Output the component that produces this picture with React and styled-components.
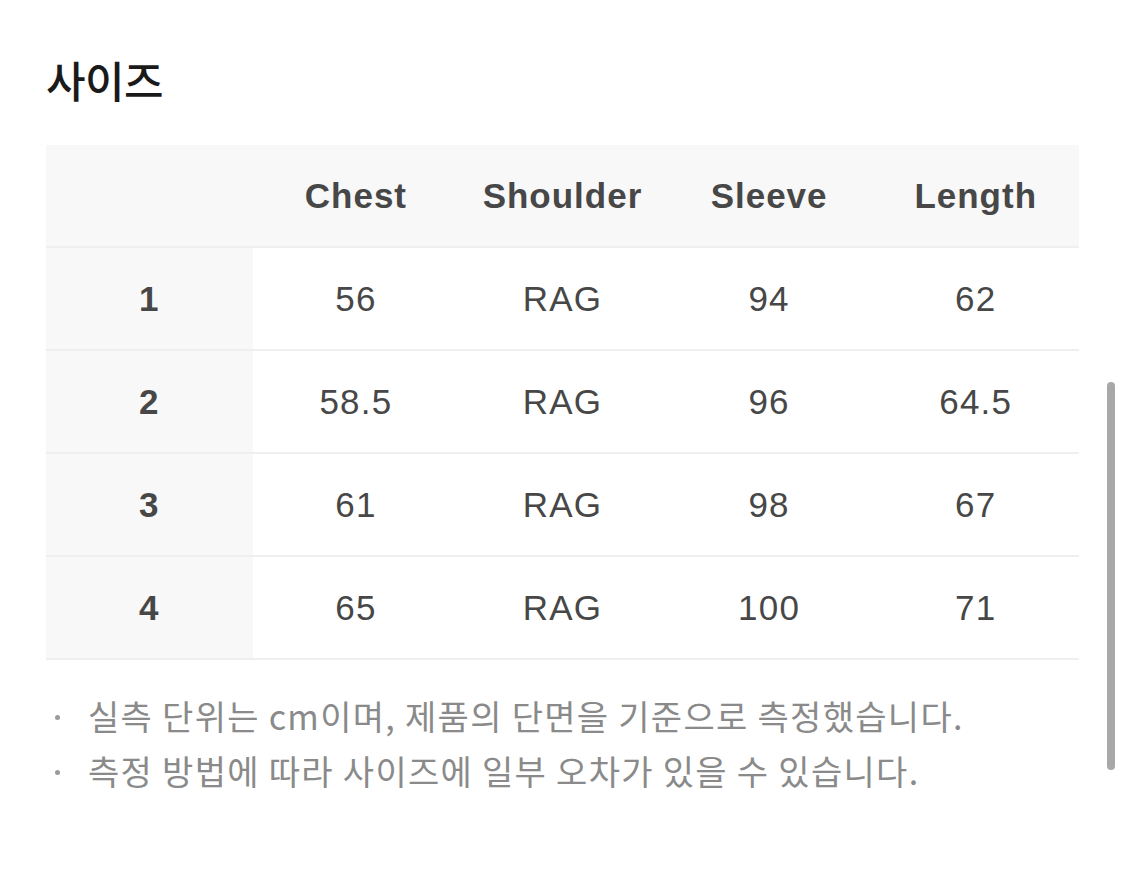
import React from "react";
import styled, { createGlobalStyle } from "styled-components";

const Global = createGlobalStyle`
  html, body { margin: 0; padding: 0; background: #fff; }
  body {
    font-family: "Liberation Sans", "Noto Sans CJK KR", sans-serif;
    -webkit-font-smoothing: antialiased;
  }
`;

const Page = styled.div`
  position: relative;
  width: 1125px;
  height: 885px;
  box-sizing: border-box;
  padding: 54px 46px 0 46px;
  overflow: hidden;
`;

const Title = styled.h2`
  margin: 0 0 40px 0;
  font-family: "Noto Sans CJK KR", sans-serif;
  font-size: 43px;
  line-height: 51px;
  font-weight: 500;
  color: #1a1a1a;
  letter-spacing: -0.5px;
`;

const Table = styled.div`
  display: grid;
  grid-template-columns: repeat(5, 1fr);
  width: 1033px;
`;

const Cell = styled.div`
  height: 101px;
  display: flex;
  align-items: center;
  justify-content: center;
  border-bottom: 2px solid #efefef;
  background: ${(p) => (p.$shade ? "#f8f8f8" : "#fff")};
  color: #474747;
  font-size: 35px;
  letter-spacing: ${(p) => (p.$bold ? "1px" : "1.2px")};
  font-weight: ${(p) => (p.$bold ? 700 : 400)};
`;

const Notes = styled.ul`
  list-style: none;
  margin: 28px 0 0 0;
  padding: 0;
  font-family: "Noto Sans CJK KR", sans-serif;
`;

const Note = styled.li`
  display: flex;
  align-items: center;
  height: 55px;
  font-size: 34px;
  color: #8a8a8a;
  letter-spacing: 1.3px;
`;

const Bullet = styled.span`
  flex: none;
  width: 5px;
  height: 5px;
  border-radius: 50%;
  background: #9a9a9a;
  margin: 4px 28px 0 9px;
`;

const Scrollbar = styled.div`
  position: absolute;
  left: 1107px;
  top: 382px;
  width: 8px;
  height: 388px;
  border-radius: 4px;
  background: #a8a8a8;
`;

const headers = ["", "Chest", "Shoulder", "Sleeve", "Length"];
const rows = [
  ["1", "56", "RAG", "94", "62"],
  ["2", "58.5", "RAG", "96", "64.5"],
  ["3", "61", "RAG", "98", "67"],
  ["4", "65", "RAG", "100", "71"],
];

const notes = [
  "실측 단위는 cm이며, 제품의 단면을 기준으로 측정했습니다.",
  "측정 방법에 따라 사이즈에 일부 오차가 있을 수 있습니다.",
];

export default function App() {
  return (
    <>
      <Global />
      <Page>
        <Title>사이즈</Title>
        <Table>
          {headers.map((h, i) => (
            <Cell key={"h" + i} $shade $bold>
              {h}
            </Cell>
          ))}
          {rows.map((r, ri) =>
            r.map((c, ci) => (
              <Cell key={ri + "-" + ci} $shade={ci === 0} $bold={ci === 0}>
                {c}
              </Cell>
            ))
          )}
        </Table>
        <Notes>
          {notes.map((n) => (
            <Note key={n}>
              <Bullet />
              {n}
            </Note>
          ))}
        </Notes>
        <Scrollbar />
      </Page>
    </>
  );
}
